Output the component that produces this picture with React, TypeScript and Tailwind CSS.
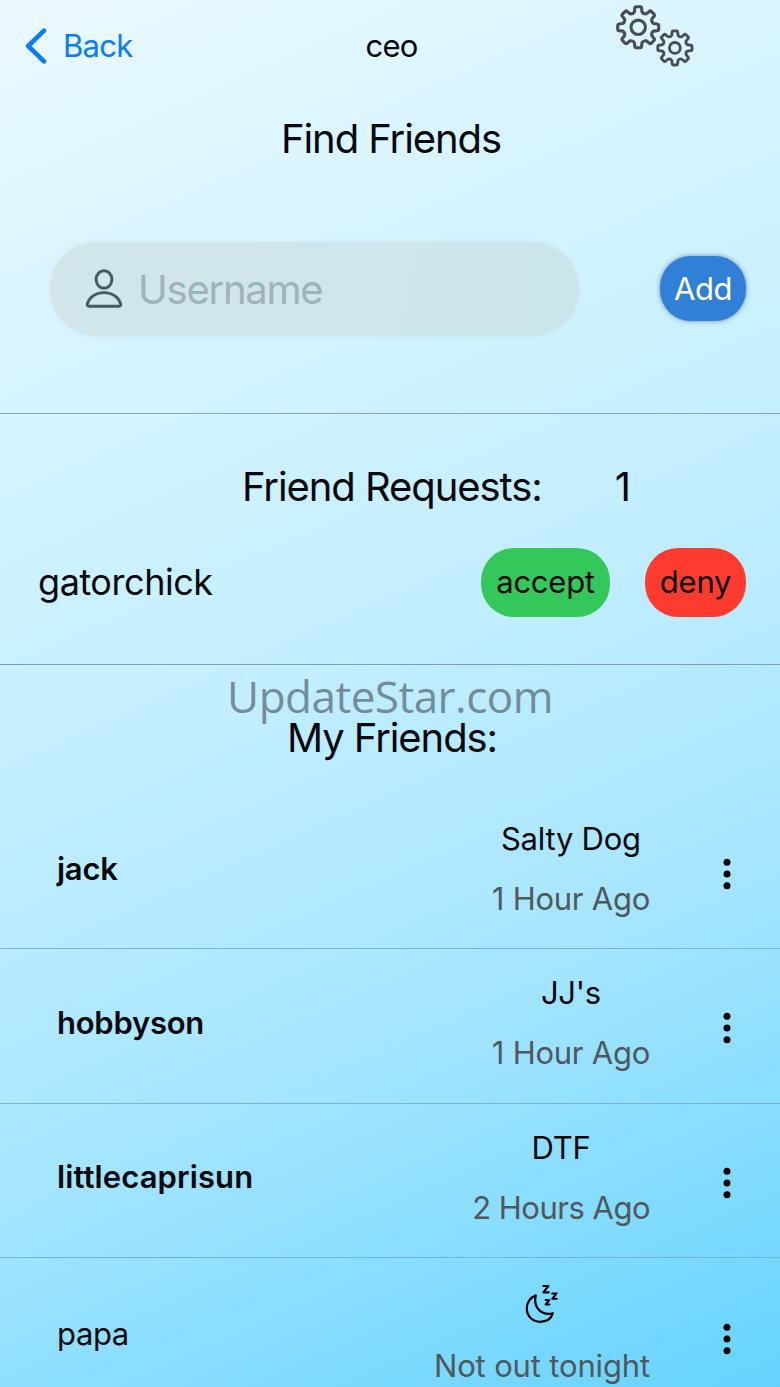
import type { ReactNode } from "react";

function gearPath(cx: number, cy: number, outer: number, root: number) {
  const at = (r: number, deg: number) => {
    const a = ((deg - 90) * Math.PI) / 180;
    return `${(cx + r * Math.cos(a)).toFixed(2)} ${(cy + r * Math.sin(a)).toFixed(2)}`;
  };
  let d = "";
  for (let k = 0; k < 8; k++) {
    const t = k * 45;
    d += `${k === 0 ? "M" : "L"}${at(root, t - 14)}`;
    d += `L${at(outer - 1.2, t - 10)}Q${at(outer, t - 9.5)} ${at(outer, t - 6)}`;
    d += `L${at(outer, t + 6)}Q${at(outer, t + 9.5)} ${at(outer - 1.2, t + 10)}`;
    d += `L${at(root, t + 14)}Q${at(root - 1.6, t + 22.5)} ${at(root, t + 31)}`;
  }
  return d + "Z";
}

function GearsIcon() {
  return (
    <svg width="84" height="68" viewBox="612 2 84 68" fill="none" stroke="#474d52" strokeWidth="3.1" strokeLinejoin="round">
      <path d={gearPath(638.2, 27.3, 20.6, 15.8)} />
      <circle cx="638.2" cy="27.3" r="7.2" />
      <path d={gearPath(674.9, 47.9, 17.2, 13)} strokeWidth="2.8" />
      <circle cx="674.9" cy="47.9" r="5.4" strokeWidth="2.8" />
    </svg>
  );
}

function PersonIcon() {
  return (
    <svg width="38" height="40" viewBox="0 0 38 40" fill="none" stroke="#465a62" strokeWidth="2.9" strokeLinejoin="round">
      <ellipse cx="19" cy="10.5" rx="7.9" ry="8.8" />
      <path d="M4 37.3C2.4 37.3 2 36.2 2.3 35C4 28.5 10.5 23.6 19 23.6S34 28.5 35.7 35C36 36.2 35.6 37.3 34 37.3Z" />
    </svg>
  );
}

function SleepIcon() {
  return (
    <svg width="36" height="42" viewBox="0 0 36 42" fill="none" stroke="#000" strokeWidth="2.2" strokeLinejoin="round" strokeLinecap="round">
      <path d="M11.8 12.3C5.6 15 2.8 20.2 2.8 25.7C2.8 33 8.6 38.8 16 38.8C22.3 38.8 27.3 35.5 29 30.2C18.2 33.2 8.7 25 11.8 12.3Z" />
      <path d="M19.4 3H24.4L19.4 9.4H24.6" />
      <path d="M28.2 10.4H32.6L28.2 15.8H32.8" strokeWidth="2" />
      <path d="M21.6 17H25.3L21.6 21.5H25.5" strokeWidth="2" />
    </svg>
  );
}

function DotsIcon() {
  return (
    <svg width="8" height="32" viewBox="0 0 8 32" fill="#000">
      <circle cx="4" cy="4.2" r="3.5" />
      <circle cx="4" cy="16" r="3.5" />
      <circle cx="4" cy="27.8" r="3.5" />
    </svg>
  );
}

function Title({ children }: { children: ReactNode }) {
  return <h2 className="text-[40px] leading-[48px] tracking-[-1.08px] whitespace-nowrap">{children}</h2>;
}

type Friend = { name: string; place: ReactNode; seen: string; rowClass: string; nameClass: string; seenClass: string };

const friends: Friend[] = [
  { name: "jack", place: "Salty Dog", seen: "1 Hour Ago", rowClass: "h-[154px]", nameClass: "pt-[54px] font-semibold", seenClass: "mt-5" },
  { name: "hobbyson", place: "JJ's", seen: "1 Hour Ago", rowClass: "h-[155px]", nameClass: "pt-[54px] font-semibold", seenClass: "mt-5" },
  {
    name: "littlecaprisun",
    place: "DTF",
    seen: "2 Hours Ago",
    rowClass: "h-[154px]",
    nameClass: "pt-[53px] font-semibold tracking-[0.1px]",
    seenClass: "mt-5 tracking-[-0.5px]",
  },
  {
    name: "papa",
    place: <SleepIcon />,
    seen: "Not out tonight",
    rowClass: "h-[158px] pt-0.5",
    nameClass: "pt-[54px] tracking-[-0.4px]",
    seenClass: "mt-[22px] tracking-[-0.15px]",
  },
];

function FriendRow({ friend }: { friend: Friend }) {
  return (
    <li className={`flex shrink-0 border-b border-[#71a9c2]/80 pr-[49px] pl-[57px] ${friend.rowClass}`}>
      <div className={`flex-1 ${friend.nameClass}`}>{friend.name}</div>
      <div className="flex flex-col items-center pt-6">
        <div className="flex h-10 items-center">{friend.place}</div>
        <div className={`whitespace-nowrap text-[#51585b] ${friend.seenClass}`}>{friend.seen}</div>
      </div>
      <button className="mt-[62.5px] ml-[73px] h-8">
        <DotsIcon />
      </button>
    </li>
  );
}

export default function App() {
  return (
    <main className="relative flex h-[1387px] w-[780px] flex-col overflow-hidden bg-[linear-gradient(156deg,#ebf9fe_0%,#d9f5ff_20%,#c2eeff_47%,#a4e5ff_70%,#66d3ff_100%)] font-['Inter',sans-serif] text-[31px] leading-10 tracking-[-0.25px] text-[#05080b]">
      <header className="grid h-[91px] shrink-0 grid-cols-3 items-center">
        <button className="flex items-center gap-[15px] pl-[25px] tracking-[-0.7px] text-[#087cfa]">
          <svg width="23" height="36" viewBox="0 0 23 36" fill="none" stroke="currentColor" strokeWidth="4.6" strokeLinecap="round" strokeLinejoin="round">
            <path d="M19 2.6L3.2 18L19 33.4" />
          </svg>
          <span>Back</span>
        </button>
        <h1 className="pl-[3px] text-center tracking-[-0.8px]">ceo</h1>
        <div className="self-start pt-0.5 pl-[92px]">
          <GearsIcon />
        </div>
      </header>

      <section className="flex h-[323px] shrink-0 flex-col items-center border-b border-[#8ba5b1] pt-[24px]">
        <div className="pl-[2px]">
          <Title>Find Friends</Title>
        </div>
        <div className="mt-[79px] flex w-full items-center justify-between pr-[34px] pl-[50px]">
          <label className="flex h-[94px] w-[529px] items-center gap-[15px] rounded-full bg-[linear-gradient(100deg,#d2e6ea,#cbe5ed)] pl-[35px] shadow-[0_0_5px_#cee6ed]">
            <PersonIcon />
            <span className="pt-0.5 text-[40px] tracking-[-1.25px] text-[#9eb4bc]">Username</span>
          </label>
          <button className="-mt-0.5 h-[65px] w-[86px] rounded-[31px] bg-[#2f80d6] pt-px tracking-[-0.5px] text-white shadow-[0_0_5px_#728d9b]">
            Add
          </button>
        </div>
      </section>

      <section className="h-[251px] shrink-0 border-b border-[#829fad] pt-[49px]">
        <div className="flex items-center gap-[73px] pl-[242px]">
          <Title>Friend Requests:</Title>
          <Title>1</Title>
        </div>
        <div className="mt-[37px] flex items-center pr-[34px] pl-[38px]">
          <span className="-mt-0.5 flex-1 text-[36px] tracking-[-0.45px]">gatorchick</span>
          <button className="h-[69px] w-[129px] rounded-[33px] bg-[#34c759] pb-0.5">accept</button>
          <button className="ml-[35px] h-[69px] w-[101px] rounded-[33px] bg-[#ff3b30] pb-0.5">deny</button>
        </div>
      </section>

      <section className="flex shrink-0 flex-col pt-[49px]">
        <div className="flex justify-center pl-1">
          <Title>My Friends:</Title>
        </div>
        <ul className="mt-[33px] flex flex-col">
          {friends.map((friend) => (
            <FriendRow key={friend.name} friend={friend} />
          ))}
        </ul>
      </section>

      <div className="pointer-events-none absolute top-[666px] left-0 w-full text-center font-['Open_Sans',sans-serif] text-[44px] leading-[60px] tracking-[-0.5px] text-[#5e727d]/80">
        UpdateStar.com
      </div>
    </main>
  );
}
